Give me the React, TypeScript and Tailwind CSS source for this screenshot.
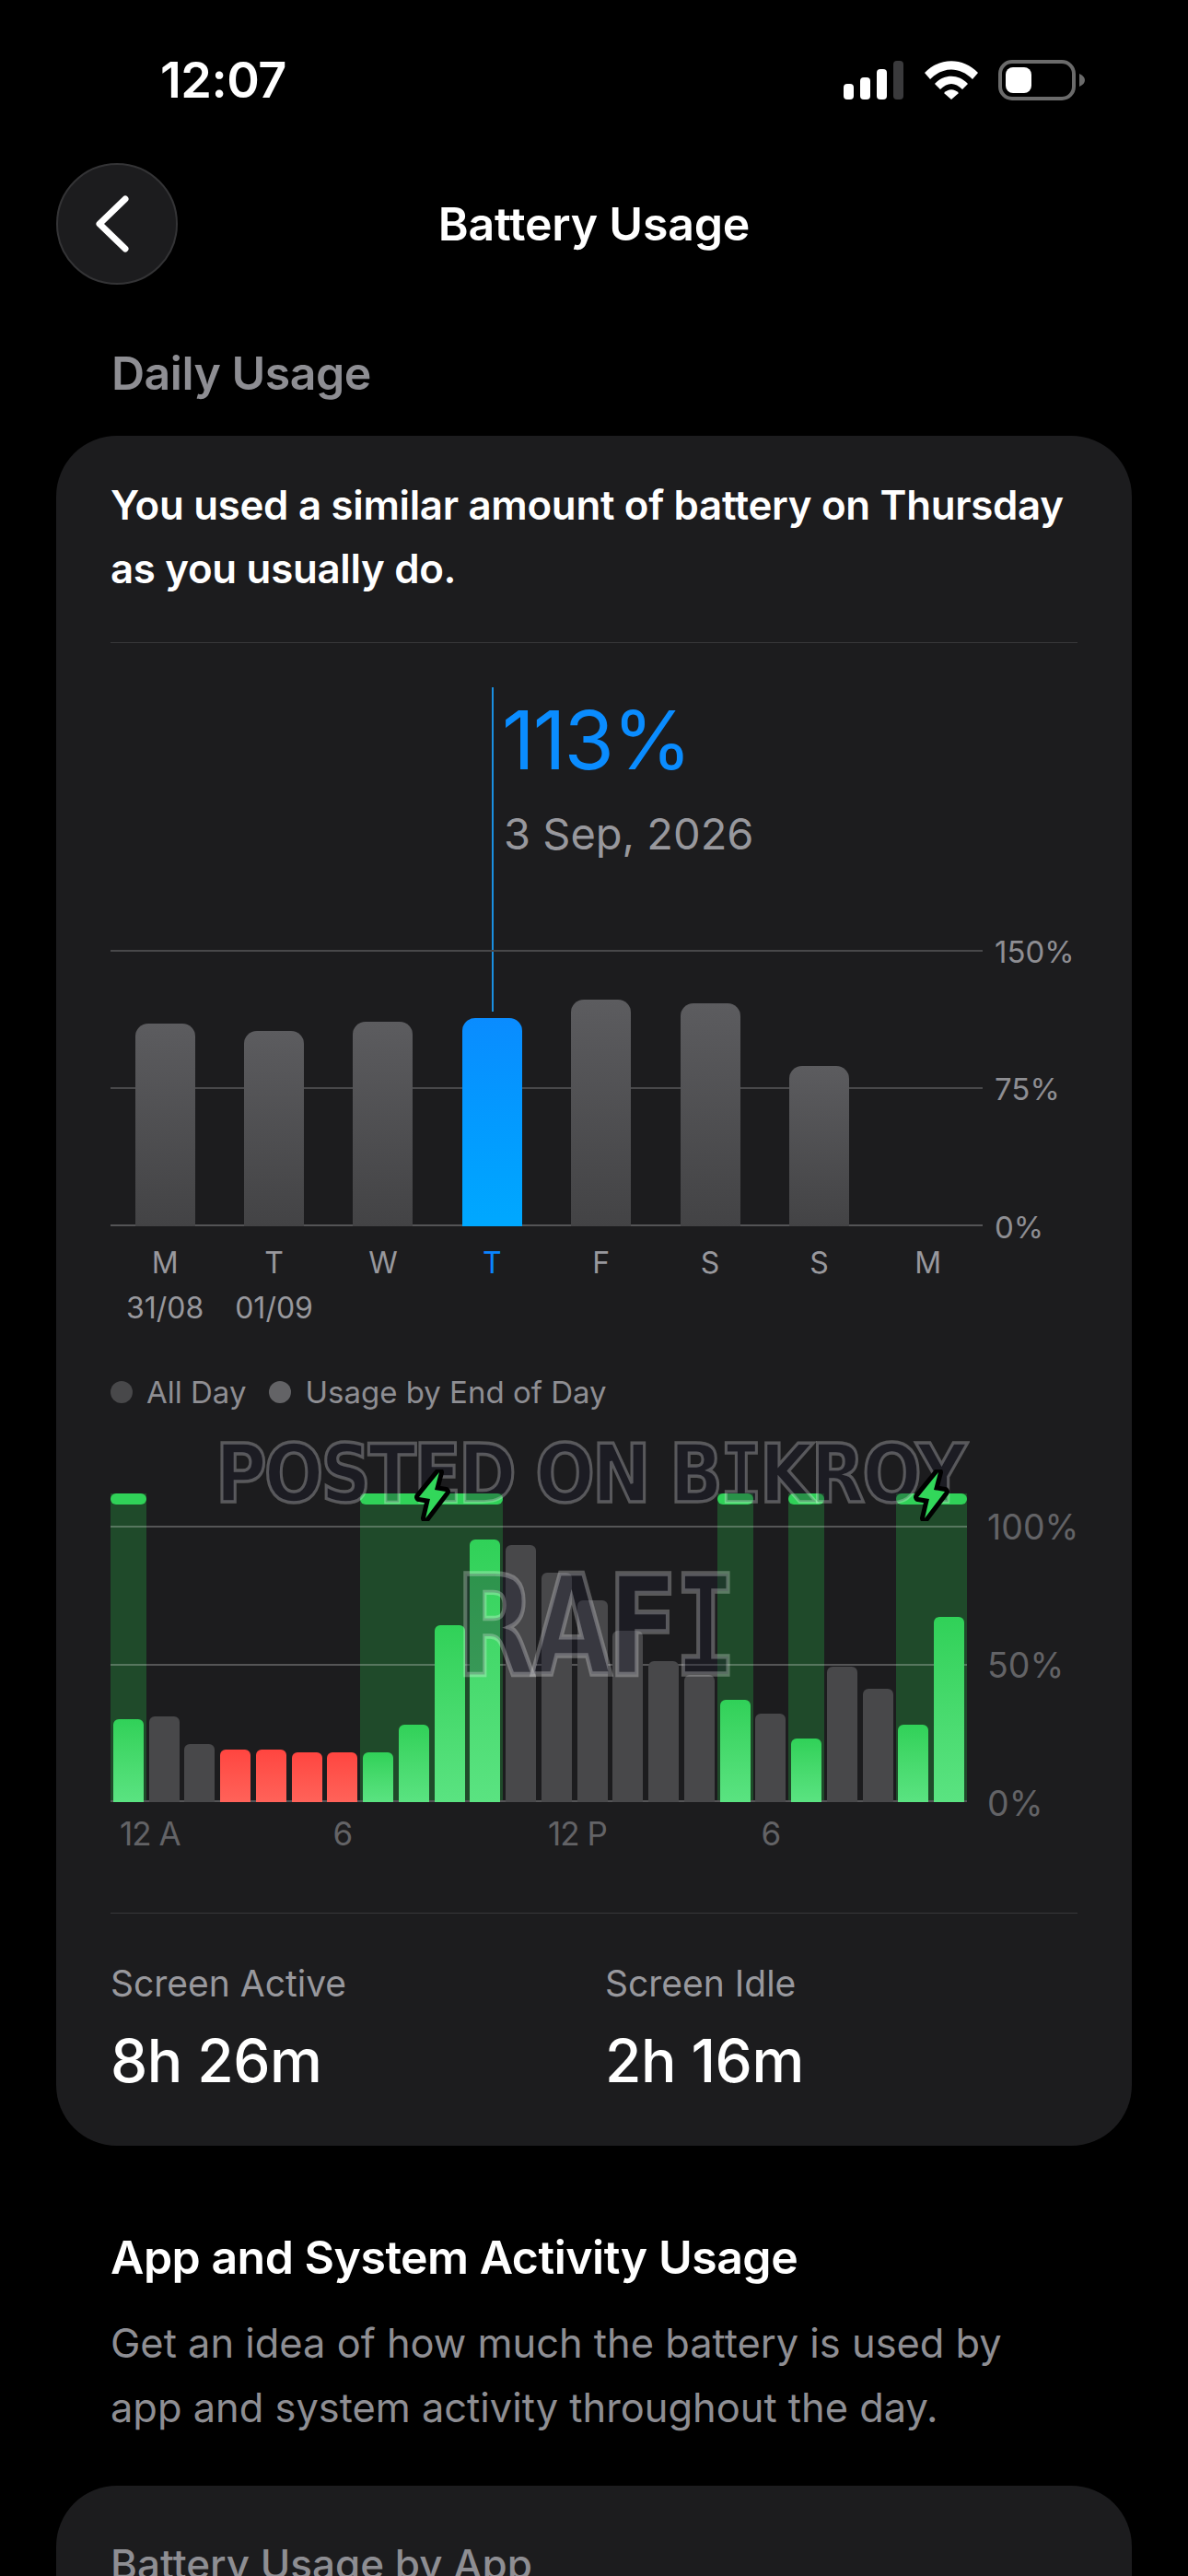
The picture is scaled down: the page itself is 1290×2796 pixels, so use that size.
import React from "react";

const days = [
  { l: "M", d: "31/08", h: 220 },
  { l: "T", d: "01/09", h: 212 },
  { l: "W", d: "", h: 222 },
  { l: "T", d: "", h: 226, active: true },
  { l: "F", d: "", h: 246 },
  { l: "S", d: "", h: 242 },
  { l: "S", d: "", h: 174 },
  { l: "M", d: "", h: 0 },
];

const hours: [number, string][] = [
  [90, "g"], [93, "x"], [63, "x"], [57, "r"], [57, "r"], [54, "r"], [54, "r"], [54, "g"],
  [84, "g"], [192, "g"], [285, "g"], [279, "x"], [249, "x"], [219, "x"], [186, "x"], [153, "x"],
  [138, "x"], [111, "g"], [96, "x"], [69, "g"], [147, "x"], [123, "x"], [84, "g"], [201, "g"],
];

const charged = [
  "col-start-1 col-span-1",
  "col-start-8 col-span-4",
  "col-start-18 col-span-1",
  "col-start-20 col-span-1",
  "col-start-23 col-span-2",
];

const barColor: Record<string, string> = {
  g: "bg-gradient-to-b from-[#30d158] to-[#5ae381]",
  x: "bg-[#48484a]",
  r: "bg-gradient-to-b from-[#ff4540] to-[#ff6259]",
};

function Bolt({ className }: { className: string }) {
  const d = "M30 3 L8 30 L20 32 L15 53 L37 24 L25 22 Z";
  return (
    <svg viewBox="0 0 44 56" className={className}>
      <path d={d} fill="#000" stroke="#000" strokeWidth="10" strokeLinejoin="round" />
      <path d={d} fill="#32d75a" />
    </svg>
  );
}

export default function App() {
  return (
    <div className="h-[2796px] w-[1290px] overflow-hidden bg-black font-['Inter','Liberation_Sans',sans-serif] text-white">
      {/* status bar */}
      <div className="flex h-[174px] items-center justify-between pl-[174px] pr-[112px]">
        <span className="text-[54px] font-semibold leading-none tracking-[-0.5px]">12:07</span>
        <div className="flex items-center">
          <svg viewBox="0 0 66 42" className="h-[42px] w-[66px]">
            <rect x="0" y="25" width="11" height="17" rx="4" fill="#fff" />
            <rect x="18" y="18" width="11" height="24" rx="4" fill="#fff" />
            <rect x="36" y="9" width="11" height="33" rx="4" fill="#fff" />
            <rect x="54" y="0" width="11" height="42" rx="4" fill="#3a3a3c" />
          </svg>
          <svg viewBox="0 0 58 42" className="ml-[22px] h-[42px] w-[58px]">
            <path d="M0 13 C16 -4 42 -4 58 13 L52 20 C38 6 20 6 6 20 Z" fill="#fff" />
            <path d="M11 25 C21 14 37 14 47 25 L41 31 C33 23 25 23 17 31 Z" fill="#fff" />
            <path d="M21 35 C26 30 32 30 37 35 L29 42 Z" fill="#fff" />
          </svg>
          <svg viewBox="0 0 94 44" className="ml-[22px] h-[44px] w-[94px]">
            <rect x="2" y="2" width="80" height="40" rx="13" fill="none" stroke="#6b6b6b" strokeWidth="4" />
            <rect x="8" y="8" width="28" height="28" rx="8" fill="#fff" />
            <path d="M88 15 C92 17 94 19 94 22 C94 25 92 27 88 29 Z" fill="#6b6b6b" />
          </svg>
        </div>
      </div>

      {/* nav */}
      <div className="mt-[3px] grid h-[132px] grid-cols-[1fr_auto_1fr] items-center px-[61px]">
        <div className="flex h-[132px] w-[132px] items-center justify-center rounded-full border-2 border-[#343436] bg-[#1c1c1e]">
          <svg viewBox="0 0 40 62" className="mr-[10px] h-[62px] w-[40px]">
            <path d="M34 4 L6 31 L34 58" fill="none" stroke="#fff" strokeWidth="7" strokeLinecap="round" strokeLinejoin="round" />
          </svg>
        </div>
        <h1 className="text-[50px] font-semibold leading-none tracking-[-0.2px]">Battery Usage</h1>
        <div />
      </div>

      <h2 className="mt-[68px] pl-[121px] text-[50px] font-semibold leading-[56px] tracking-[-0.5px] text-[#8e8e93]">
        Daily Usage
      </h2>

      {/* main card */}
      <section className="mx-[61px] mt-[40px] rounded-[66px] bg-[#1c1c1e] px-[59px] pb-[60px] pt-[41px]">
        <p className="text-[43.8px] font-semibold leading-[69px] tracking-[-0.3px] text-white">
          You used a similar amount of battery on Thursday
          <br />
          as you usually do.
        </p>
        <div className="mt-[45px] h-px bg-[#38383a]" />

        {/* hero */}
        <div className="relative h-[333px] pl-[425px] pt-[63px]">
          <div className="absolute left-[414px] top-[48px] h-[352px] w-[2px] bg-[#1a8fe0]" />
          <div className="text-[88px] font-normal leading-[84px] tracking-[-2px] text-[#0a8cff]">113%</div>
          <div className="ml-[2px] mt-[36px] text-[47px] font-normal leading-[48px] text-[#98989d]">3 Sep, 2026</div>
        </div>

        {/* weekly chart */}
        <div className="relative h-[300px] w-[947px]">
          <div className="absolute left-0 right-0 top-0 h-[2px] bg-[#48484a]" />
          <div className="absolute left-0 right-0 top-[149px] h-[2px] bg-[#48484a]" />
          <div className="absolute bottom-0 left-0 right-0 h-[2px] bg-[#545456]" />
          <span className="absolute left-[960px] top-[-18px] text-[33px] leading-[40px] text-[#8e8e93]">150%</span>
          <span className="absolute left-[960px] top-[131px] text-[33px] leading-[40px] text-[#8e8e93]">75%</span>
          <span className="absolute left-[960px] top-[281px] text-[33px] leading-[40px] text-[#8e8e93]">0%</span>
          <div className="relative flex h-full items-end">
            {days.map((b, i) => (
              <div key={i} className="flex flex-1 justify-center">
                <div
                  className={
                    b.active
                      ? "w-[65px] rounded-t-[14px] bg-gradient-to-b from-[#0a8cff] to-[#00a8ff]"
                      : "w-[65px] rounded-t-[14px] bg-gradient-to-b from-[#5c5c5f] to-[#434345]"
                  }
                  style={{ height: b.h }}
                />
              </div>
            ))}
          </div>
        </div>
        <div className="mt-[15px] grid w-[947px] grid-cols-8 text-center text-[32px] leading-[49px] text-[#98989d]">
          {days.map((b, i) => (
            <span key={i} className={b.active ? "text-[#0a84ff]" : ""}>
              {b.l}
            </span>
          ))}
          {days.map((b, i) => (
            <span key={i} className="h-[49px] whitespace-nowrap">
              {b.d}
            </span>
          ))}
        </div>

        {/* legend */}
        <div className="mt-[47px] flex h-[40px] items-center text-[33px] leading-[40px] text-[#8e8e93]">
          <span className="h-[24px] w-[24px] rounded-full bg-[#48484a]" />
          <span className="ml-[15px]">All Day</span>
          <span className="ml-[25px] h-[24px] w-[24px] rounded-full bg-[#636366]" />
          <span className="ml-[15px]">Usage by End of Day</span>
        </div>

        {/* hourly chart */}
        <div className="relative mt-[90px] h-[335px] w-[930px]">
          <div className="absolute inset-0 grid grid-cols-24">
            {charged.map((c) => (
              <div key={c} className={`${c} relative bg-[#1f4a2a]`}>
                <div className="h-[12px] rounded-[6px] bg-[#30d158]" />
              </div>
            ))}
          </div>
          <div className="absolute left-0 right-0 top-[35px] h-[2px] bg-[#ffffff]/25" />
          <div className="absolute left-0 right-0 top-[185px] h-[2px] bg-[#ffffff]/25" />
          <div className="absolute bottom-0 left-0 right-0 h-[2px] bg-[#545456]" />
          <span className="absolute left-[952px] top-[15px] text-[37.5px] leading-[44px] text-[#636366]">100%</span>
          <span className="absolute left-[952px] top-[165px] text-[37.5px] leading-[44px] text-[#636366]">50%</span>
          <span className="absolute left-[952px] top-[315px] text-[37.5px] leading-[44px] text-[#636366]">0%</span>
          <div className="absolute inset-0 flex items-end">
            {hours.map(([h, c], i) => (
              <div key={i} className="flex flex-1 justify-center">
                <div className={`w-[33px] rounded-t-[6px] ${barColor[c]}`} style={{ height: h }} />
              </div>
            ))}
          </div>

          {/* watermark */}
          <span className="absolute left-[114px] top-[-65px] origin-top-left scale-y-[1.155] whitespace-nowrap font-['DejaVu_Sans',sans-serif] text-[76px] font-bold leading-none tracking-[-3px] text-[#1c1e2d]/35 [-webkit-text-stroke:3px_rgba(255,255,255,0.27)]">
            POSTED ON B<span className="font-['DejaVu_Sans_Mono',monospace]">I</span>KROY
          </span>
          <span className="absolute left-[375px] top-[70px] origin-top-left scale-y-[1.33] whitespace-nowrap font-['DejaVu_Sans',sans-serif] text-[112px] font-bold leading-none tracking-[-4px] text-[#1c1e2d]/35 [-webkit-text-stroke:4px_rgba(255,255,255,0.27)]">
            RAF<span className="font-['DejaVu_Sans_Mono',monospace]">I</span>
          </span>

          <Bolt className="absolute left-[327px] top-[-26px] h-[56px] w-[44px]" />
          <Bolt className="absolute left-[869px] top-[-26px] h-[56px] w-[44px]" />
        </div>
        <div className="relative mt-[14px] h-[40px] w-[930px] text-[35px] leading-[40px] text-[#636366]">
          <div className="grid grid-cols-24">
            <span className="col-span-6 pl-[10px] tracking-[-1px]">12 A</span>
            <span className="col-span-6 pl-[9px]">6</span>
            <span className="col-span-6 pl-[10px] tracking-[-1px]">12 P</span>
            <span className="col-span-6 pl-[9px]">6</span>
          </div>
        </div>

        <div className="mt-[66px] h-px bg-[#38383a]" />

        {/* stats */}
        <div className="mt-[53px] grid grid-cols-[537px_1fr]">
          <div>
            <div className="text-[39px] font-normal leading-[46px] text-[#98989d]">Screen Active</div>
            <div className="mt-[29px] text-[64px] font-medium leading-[64px] tracking-[-0.5px]">8h 26m</div>
          </div>
          <div>
            <div className="text-[39px] font-normal leading-[46px] text-[#98989d]">Screen Idle</div>
            <div className="mt-[29px] text-[64px] font-medium leading-[64px] tracking-[-0.5px]">2h 16m</div>
          </div>
        </div>
      </section>

      <h2 className="ml-[120px] mt-[93px] text-[50px] font-semibold leading-[56px] tracking-[-0.5px]">
        App and System Activity Usage
      </h2>
      <p className="ml-[120px] mt-[30px] text-[43.4px] font-normal leading-[70px] text-[#8e8e93]">
        Get an idea of how much the battery is used by
        <br />
        app and system activity throughout the day.
      </p>

      <section className="mx-[61px] mt-[50px] h-[200px] rounded-[66px] bg-[#1c1c1e] px-[59px] pt-[60px]">
        <div className="text-[44px] font-medium leading-[50px] text-[#8e8e93]">Battery Usage by App</div>
      </section>
    </div>
  );
}
